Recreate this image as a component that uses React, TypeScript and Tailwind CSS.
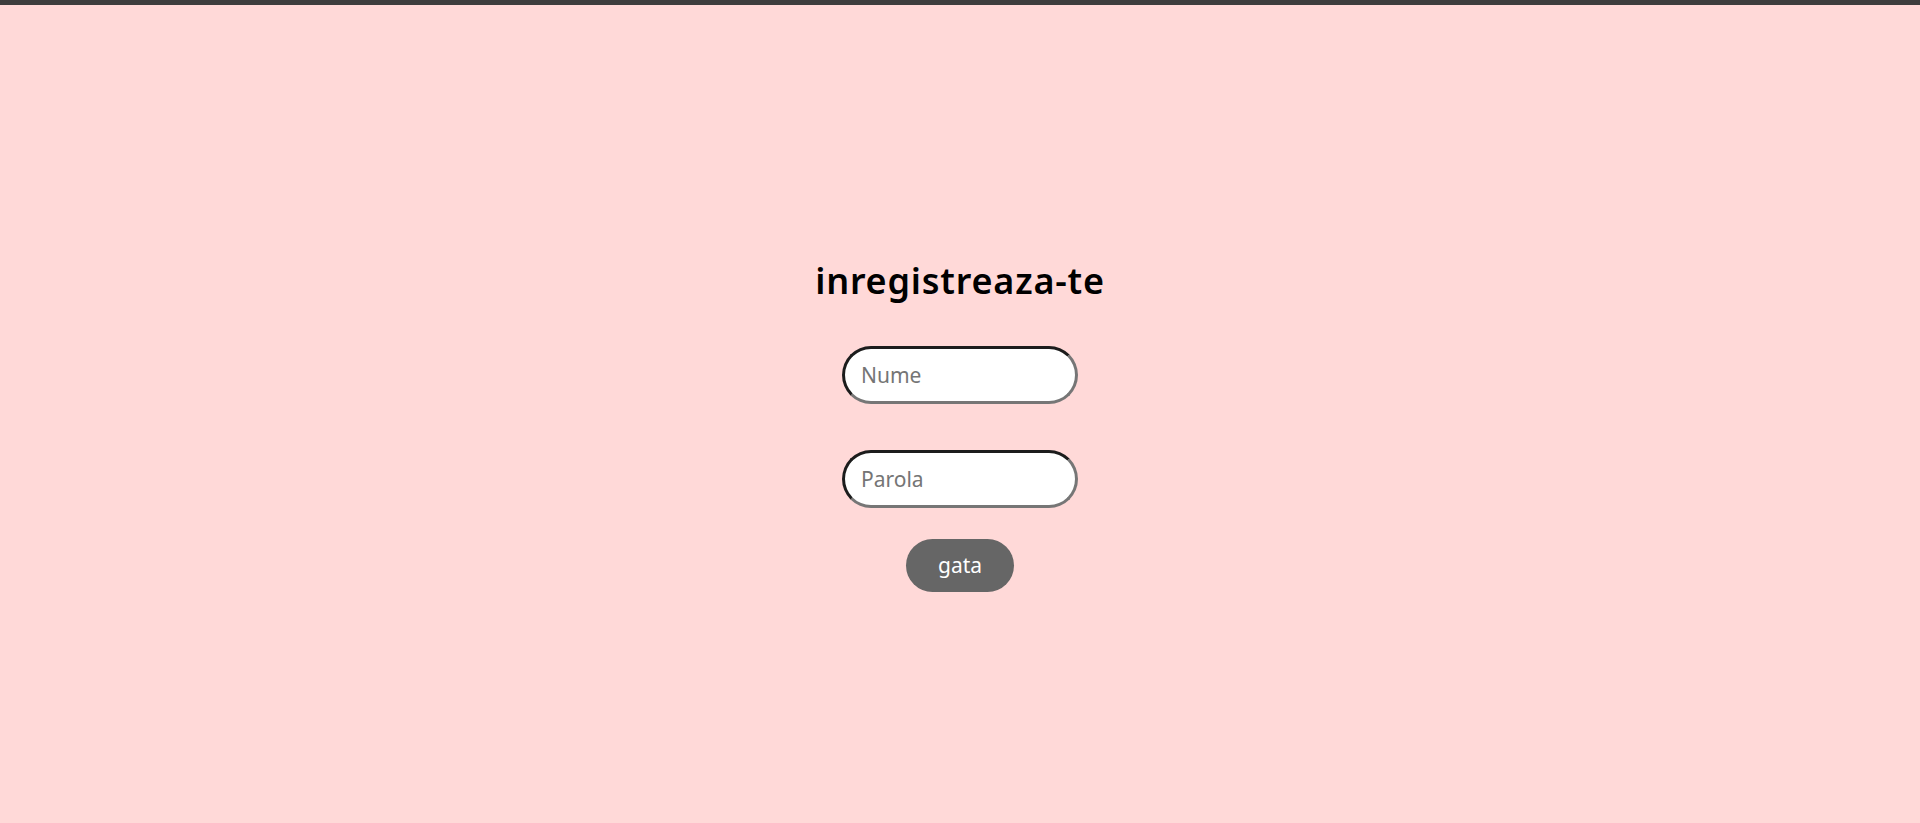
import React from "react";

export default function App() {
  return (
    <div className="min-h-[823px] w-full bg-[#ffd9d8] flex flex-col" style={{ fontFamily: '"Noto Sans", Lato, sans-serif' }}>
      <div className="h-[5px] w-full bg-[#3d3d3d]" />
      <div className="flex flex-col items-center pt-[256px]">
        <h1 className="text-[36px] leading-[40px] font-semibold text-black tracking-[0.8px]">inregistreaza-te</h1>
        <input
          placeholder="Nume"
          className="mt-[45px] w-[236px] h-[58px] rounded-full bg-white border-[3px] border-t-[#1c1c1c] border-l-[#1c1c1c] border-r-[#767676] border-b-[#767676] px-[16px] text-[21px] text-black placeholder:text-[#757575] outline-none"
        />
        <input
          placeholder="Parola"
          className="mt-[46px] w-[236px] h-[58px] rounded-full bg-white border-[3px] border-t-[#1c1c1c] border-l-[#1c1c1c] border-r-[#767676] border-b-[#767676] px-[16px] text-[21px] text-black placeholder:text-[#757575] outline-none"
        />
        <button className="mt-[31px] w-[108px] h-[53px] rounded-full bg-[#666666] text-white text-[21px]">gata</button>
      </div>
    </div>
  );
}
